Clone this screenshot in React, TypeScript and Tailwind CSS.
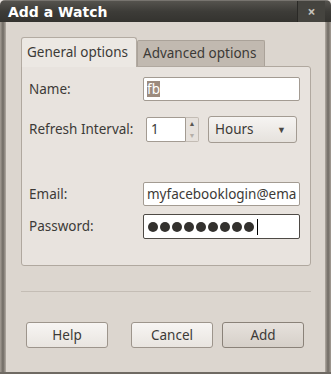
import React from "react";

export default function App() {
  const dots = [0, 1, 2, 3, 4, 5, 6, 7, 8];
  return (
    <div className="w-[331px] h-[374px] bg-[#e8e3de] font-['Noto_Sans',sans-serif] text-[13.5px] text-[#3c3a37]">
      <div className="w-[331px] h-[374px] flex flex-col rounded-t-[5px] overflow-hidden bg-[#dcd6cf]">
        {/* Title bar */}
        <div className="h-[22px] flex items-stretch bg-gradient-to-b from-[#55534e] via-[#3d3c38] to-[#34332f] border-t border-[#77746f]">
          <div className="pl-[8px] flex items-center text-white font-bold text-[14px] font-['DejaVu_Sans',sans-serif] leading-none">
            Add a Watch
          </div>
          <div className="ml-auto mr-[6px] w-[28px] flex items-center justify-center border-l border-[#2a2926] bg-[#45443f] text-[#c6c2bc] text-[14px] font-bold leading-none">
            ×
          </div>
        </div>
        {/* Body */}
        <div className="flex-1 flex">
          <div className="w-[6px] bg-gradient-to-r from-[#a59e96] via-[#6f6a63] to-[#b2aba3]" />
          <div className="flex-1 flex flex-col pt-[15px] pl-[15px] pr-[14px]">
            {/* Tabs */}
            <div className="flex items-start h-[29px] relative z-10">
              <div className="w-[116px] h-[30px] bg-[#ece8e3] border border-b-0 border-[#b3aba2] rounded-t-[3px] pl-[5px] flex items-center whitespace-nowrap">
                General options
              </div>
              <div className="mt-[3px] w-[128px] h-[26px] bg-[#c1b9b0] border border-b-0 border-[#aaa299] rounded-t-[2px] pl-[5px] flex items-center whitespace-nowrap">
                Advanced options
              </div>
            </div>
            {/* Panel */}
            <div className="h-[200px] border border-[#b0a89f] rounded-[3px] rounded-tl-none bg-[#e8e3de] pt-[10px] pl-[7px] flex flex-col">
              <div className="flex items-center h-[24px]">
                <div className="w-[114px]">Name:</div>
                <div className="w-[157px] h-[24px] bg-white border border-[#a39b92] rounded-[2px] pl-[3px] flex items-center">
                  <span className="bg-[#9c8b7e] text-white leading-[16px]">fb</span>
                </div>
              </div>
              <div className="flex items-center h-[27px] mt-[15px]">
                <div className="w-[117px] whitespace-nowrap">Refresh Interval:</div>
                <div className="w-[40px] h-[25px] bg-white border border-[#a39b92] rounded-l-[2px] pl-[4px] flex items-center">1</div>
                <div className="w-[13px] h-[25px] flex flex-col border border-l-0 border-[#c3bcb4] rounded-r-[2px] bg-[#e6e1dc]">
                  <div className="flex-1 flex items-center justify-center text-[7px] text-[#5a5651] leading-none">▲</div>
                  <div className="flex-1 flex items-center justify-center text-[7px] text-[#b5afa8] leading-none">▼</div>
                </div>
                <div className="ml-[9px] w-[89px] h-[27px] border border-[#a39b92] rounded-[3px] bg-gradient-to-b from-[#f6f4f2] to-[#e6e2dd] pl-[6px] pr-[10px] flex items-center">
                  <span>Hours</span>
                  <span className="ml-auto text-[9px] text-[#4a4743]">▼</span>
                </div>
              </div>
              <div className="flex items-center h-[24px] mt-[39px]">
                <div className="w-[114px]">Email:</div>
                <div className="w-[157px] h-[24px] bg-white border border-[#a39b92] rounded-[2px] pl-[3px] flex items-center overflow-hidden whitespace-nowrap">
                  myfacebooklogin@ema
                </div>
              </div>
              <div className="flex items-center h-[25px] mt-[8px]">
                <div className="w-[114px]">Password:</div>
                <div className="w-[157px] h-[25px] bg-white border border-[#4e4a45] rounded-[2px] pl-[4px] flex items-center gap-[2px] overflow-hidden">
                  {dots.map((d) => (
                    <span key={d} className="w-[10px] h-[10px] rounded-full bg-[#33312e]" />
                  ))}
                  <span className="ml-[1px] w-[1px] h-[16px] bg-black" />
                </div>
              </div>
            </div>
            {/* Separator */}
            <div className="mt-[25px] h-[1px] bg-[#c4bdb5]" />
            {/* Buttons */}
            <div className="mt-[30px] ml-[5px] flex">
              <div className="w-[82px] h-[26px] border border-[#9d958c] rounded-[3px] bg-gradient-to-b from-[#f7f5f3] to-[#e9e5e0] flex items-center justify-center">Help</div>
              <div className="ml-[23px] w-[82px] h-[26px] border border-[#9d958c] rounded-[3px] bg-gradient-to-b from-[#f7f5f3] to-[#e9e5e0] flex items-center justify-center">Cancel</div>
              <div className="ml-[9px] w-[82px] h-[26px] border border-[#8a8279] rounded-[3px] bg-gradient-to-b from-[#e6e1dc] to-[#d6d0c9] flex items-center justify-center">Add</div>
            </div>
          </div>
          <div className="w-[6px] bg-gradient-to-r from-[#b2aba3] via-[#6f6a63] to-[#a59e96]" />
        </div>
        <div className="h-[2px] bg-[#6f6a63]" />
      </div>
    </div>
  );
}
